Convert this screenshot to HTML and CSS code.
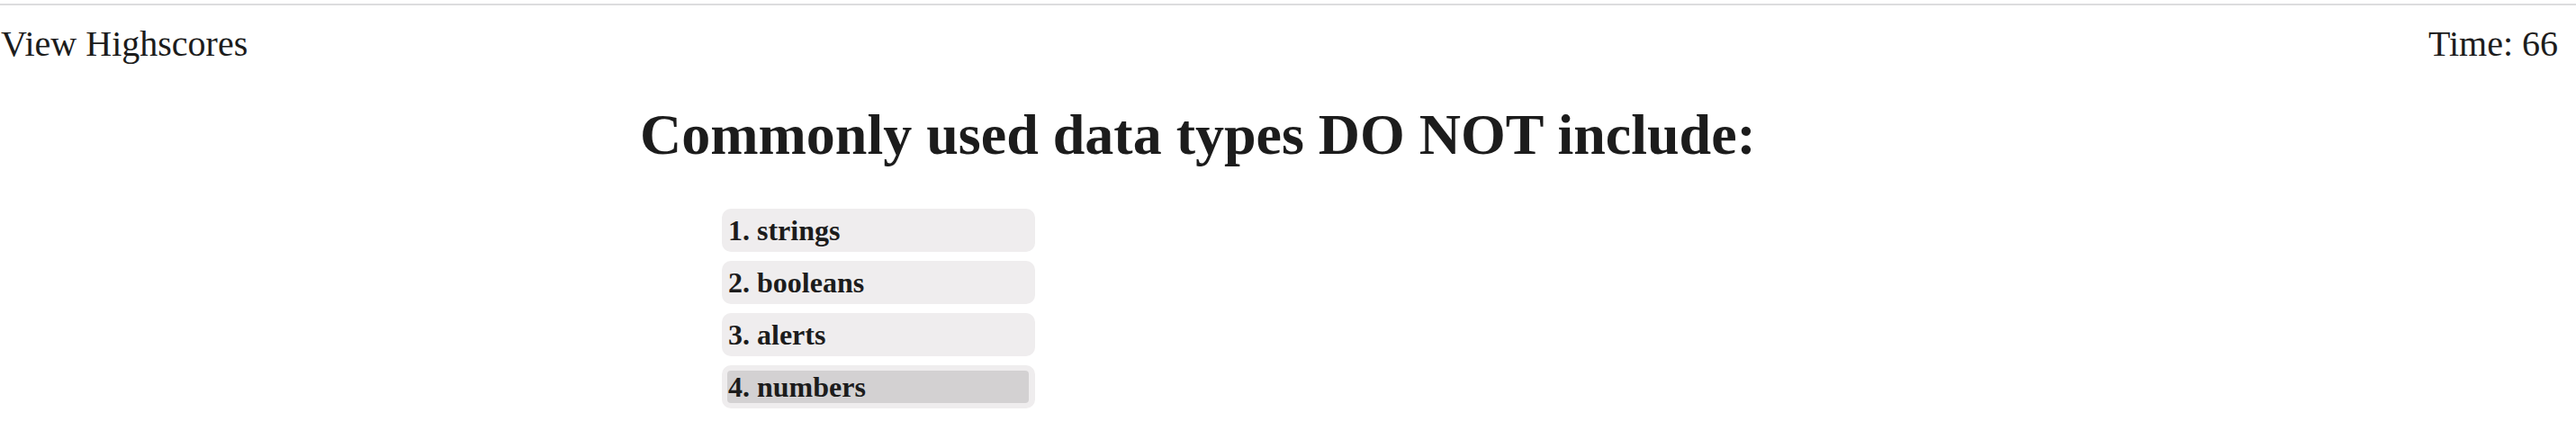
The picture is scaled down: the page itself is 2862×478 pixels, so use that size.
FILE: index.html
```html
<!DOCTYPE html>
<html lang="en">
<head>
<meta charset="utf-8">
<title>Code Quiz</title>
<link rel="stylesheet" href="styles.css">
</head>
<body>
<header class="topbar">
  <a class="highscores" href="#">View Highscores</a>
  <div class="timer">Time: <span>66</span></div>
</header>
<main class="quiz">
  <h1 class="question">Commonly used data types DO NOT include:</h1>
  <ol class="choices">
    <li class="choice"><button class="choice-btn">1. strings</button></li>
    <li class="choice"><button class="choice-btn">2. booleans</button></li>
    <li class="choice"><button class="choice-btn">3. alerts</button></li>
    <li class="choice"><button class="choice-btn is-hover">4. numbers</button></li>
  </ol>
</main>
</body>
</html>
```

FILE: styles.css
```css
html, body {
  margin: 0;
  padding: 0;
  background: #ffffff;
}

body {
  font-family: "Liberation Serif", "Times New Roman", serif;
  color: #1c1c1c;
}

.topbar {
  margin-top: 4px;
  border-top: 2px solid #dcdcde;
  padding: 20px 20px 0 1px;
  display: flex;
  justify-content: space-between;
  align-items: baseline;
  font-size: 40px;
  line-height: 46px;
}

.highscores {
  color: #1c1c1c;
  text-decoration: none;
}

.timer {
  color: #1c1c1c;
}

.quiz {
  padding-left: 711px;
}

.question {
  margin: 41px 0 0;
  font-size: 64px;
  line-height: 74px;
  font-weight: bold;
}

.choices {
  list-style: none;
  margin: 45px 0 0;
  padding: 0 0 0 91px;
  display: flex;
  flex-direction: column;
  gap: 10px;
}

.choice {
  width: 348px;
  box-sizing: border-box;
  padding: 6px 7px 6px 6px;
  background: #efedee;
  border-radius: 10px;
}

.choice-btn {
  display: block;
  width: 100%;
  height: 36px;
  margin: 0;
  padding: 0 0 0 1px;
  border: none;
  border-radius: 4px;
  background: transparent;
  font-family: "Liberation Serif", "Times New Roman", serif;
  font-weight: bold;
  font-size: 32px;
  line-height: 36px;
  color: #1c1c1c;
  text-align: left;
  cursor: pointer;
}

.choice-btn.is-hover {
  background: #d3d1d2;
}
```
